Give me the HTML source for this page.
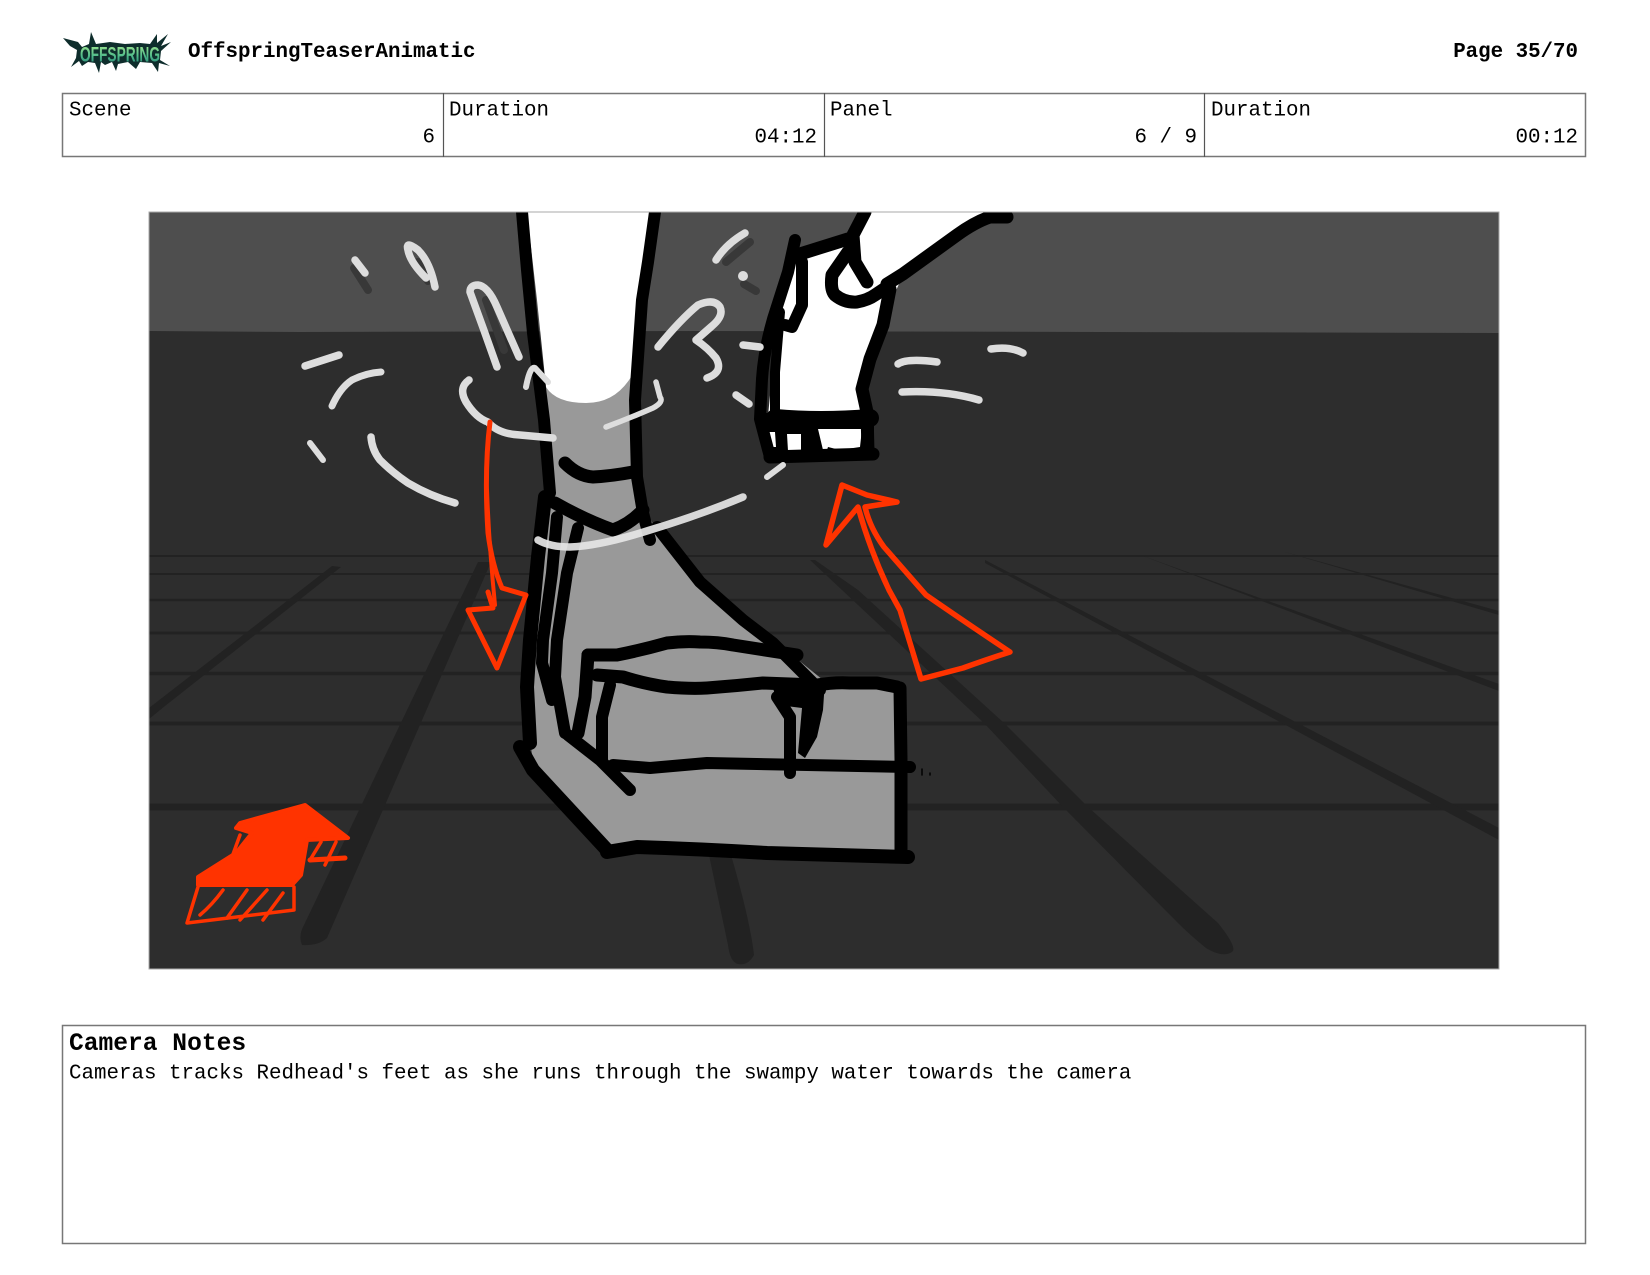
<!DOCTYPE html>
<html><head><meta charset="utf-8"><title>OffspringTeaserAnimatic</title>
<style>
html,body{margin:0;padding:0;background:#fff;width:1650px;height:1275px;overflow:hidden}
svg{display:block;position:absolute;left:0;top:0}
text{font-family:"Liberation Mono",monospace;fill:#000}
.k{fill:none;stroke:#000;stroke-linecap:round;stroke-linejoin:round}
.s{fill:none;stroke:#ddd;stroke-width:7.5;stroke-linecap:round;stroke-linejoin:round}
.h{fill:none;stroke:#383838;stroke-width:8;stroke-linecap:round;stroke-linejoin:round}
.r{fill:none;stroke:#ff3300;stroke-linecap:round;stroke-linejoin:round}
</style></head><body>
<svg width="1650" height="1275" viewBox="0 0 1650 1275" xmlns="http://www.w3.org/2000/svg">
<defs>
<clipPath id="p"><rect x="149" y="212" width="1350" height="757"/></clipPath>
<linearGradient id="g" x1="0" y1="0" x2="0" y2="1"><stop offset="0" stop-color="#a5e98f"/><stop offset=".55" stop-color="#4fb98a"/><stop offset="1" stop-color="#1d7a70"/></linearGradient>
</defs>
<rect width="1650" height="1275" fill="#fff"/>

<!-- logo -->
<path fill="#0e2d2c" d="M63 38 L78 42 L82 47 L89 44 L91 32 L96 44 L110 42 L125 44 L140 43 L150 44 L157 34 L157 43 L168 34 L161 46 L171 42 L161 51 L160 60 L170 66 L159 63 L158 72 L152 63 L140 62 L136 69 L128 62 L118 64 L116 71 L112 62 L105 65 L101 62 L99 73 L95 63 L88 62 L82 66 L79 61 L71 67 L76 58 L77 50 L70 46 Z"/>
<text x="80" y="61.500" textLength="80" lengthAdjust="spacingAndGlyphs" style="font-family:'Liberation Sans',sans-serif;font-weight:700;font-size:21px;fill:url(#g)">OFFSPRING</text>

<!-- header text -->
<text x="188" y="57" font-size="20.83" font-weight="700">OffspringTeaserAnimatic</text>
<text x="1578" y="57" font-size="20.8" font-weight="700" text-anchor="end">Page 35/70</text>

<!-- table -->
<rect x="62.500" y="93.500" width="1523" height="63" fill="none" stroke="#777" stroke-width="1.5"/>
<path d="M443.500 93V157M824.500 93V157M1204.500 93V157" stroke="#555" stroke-width="1.2"/>
<text x="69" y="115.500" font-size="20.83">Scene</text>
<text x="449" y="115.500" font-size="20.83">Duration</text>
<text x="830" y="115.500" font-size="20.83">Panel</text>
<text x="1211" y="115.500" font-size="20.83">Duration</text>
<text x="435" y="142.500" font-size="20.83" text-anchor="end">6</text>
<text x="817" y="142.500" font-size="20.83" text-anchor="end">04:12</text>
<text x="1197" y="142.500" font-size="20.83" text-anchor="end">6 / 9</text>
<text x="1578" y="142.500" font-size="20.83" text-anchor="end">00:12</text>

<!-- panel -->
<g clip-path="url(#p)">
<rect x="149" y="212" width="1350" height="757" fill="#2d2d2d"/>
<path d="M149 212H1499V333L1100 332L700 331L300 332L149 331Z" fill="#4e4e4e"/>

<!-- floor grid -->
<g stroke="#222" fill="none">
<path d="M149 556H1499" stroke-width="2"/>
<path d="M149 574H1499" stroke-width="2"/>
<path d="M149 600H1499" stroke-width="2.5"/>
<path d="M149 633H1499" stroke-width="3"/>
<path d="M149 673.500H1499" stroke-width="3.5"/>
<path d="M149 723.500H1499" stroke-width="4"/>
<path d="M149 807H1499" stroke-width="7"/>
</g>
<g fill="#222">
<path d="M332 566L341 567L165 706L149 719L149 708Z"/>
<path d="M478 562L491 562L327 938Q318 946 302 945Q298 936 304 925Z"/>
<path d="M709 855L731 855Q750 920 754 955Q748 966 738 964Q730 962 728 945Z"/>
<path d="M810 560L815 560L858 590L1004 723L1088 807L1218 923Q1238 948 1232 952Q1222 958 1206 948Q1190 935 1178 923L1063 807L984 723L842 590Z"/>
<path d="M985 560L1499 828L1499 840L985 563Z"/>
<path d="M1143 556L1499 684L1499 691Z"/>
<path d="M1285 552L1499 611L1499 615Z"/>
</g>

<!-- splash shadows -->
<path class="h" d="M354 268L368 290"/>
<path class="h" d="M418 262L428 281"/>
<path class="h" d="M486 300L504 350"/>
<path class="h" d="M726 262L750 242"/>
<path class="h" d="M744 284L756 291"/>

<!-- front foot fill -->
<path fill="#999" d="M546 387L586 403L631 377L636 400L640 500L658 533L711 590L765 633L823 680L899 684L902 760L899 852L740 855L635 845L609 852L533 763L524 690L533 600L548 490Z"/>
<path fill="#fff" d="M527 212H650L640 300L631 377Q615 403 586 403Q556 403 546 387L537 300Z"/>

<!-- front foot lines -->
<g class="k">
<path stroke-width="12" d="M522 212L527 270L533 333L544 420L550 493"/>
<path stroke-width="12" d="M655 212L648 262L642 300L635 400L637 477L643 513L650 540"/>
<path stroke-width="13" d="M565 463Q578 476 593 477Q612 476 633 472"/>
<path stroke-width="13" d="M555 503Q585 520 613 530Q630 524 643 510"/>
<path stroke-width="12" d="M657 527L700 582L743 620L773 643L820 690"/>
<path stroke-width="14" d="M545 497L538 557L530 640L527 687L530 743"/>
<path stroke-width="14" d="M520 747L533 770L607 850"/>
<path stroke-width="12" d="M557 517L552 573L543 640L542 663L552 700"/>
<path stroke-width="12" d="M578 528L567 573L557 640L555 677L565 733"/>
<path stroke-width="12" d="M568 735L600 760L630 790"/>
<path stroke-width="13" d="M588 655L617 655Q642 650 667 643Q684 641 700 642Q718 642 733 645L797 655"/>
<path stroke-width="13" d="M597 675L623 677Q645 684 667 687Q690 689 707 688Q735 686 763 683L817 685Q835 682 850 683L877 683L897 687"/>
<path stroke-width="13" d="M900 688L901 760L901 853"/>
<path stroke-width="14" d="M607 852L637 847Q700 849 767 853L908 857"/>
<path stroke-width="13" d="M588 655L585 697L578 733"/>
<path stroke-width="12" d="M610 685L602 717L602 760"/>
<path stroke-width="12" d="M613 765L650 768L707 763L910 767"/>
<path stroke-width="12" d="M777 697L790 717L790 773"/>
<path stroke-width="1.500" d="M922 769V775M930 773V775"/>
</g>
<path fill="#000" d="M770 678L825 680L823 710L817 737L805 758L798 753L802 708L778 705Z"/>

<!-- back foot -->
<path fill="#fff" d="M864 212H990L954 240L904 273L884 317L862 367L868 416L768 416L776 333L795 250L847 237Z"/>
<path fill="#000" d="M765 413H874V455L767 458Z"/>
<path fill="#fff" d="M769 432L775 432L776 447L772 447ZM787 434L801 434L801 451L788 451ZM818 429L862 429L860 447L840 450L828 447L827 450L823 450Z"/>
<g class="k">
<path stroke-width="12" d="M795 240L788 272L773 319Q764 350 762 379L760 419L770 457"/>
<path stroke-width="10" d="M780 312L775 372L775 412"/>
<path stroke-width="12" d="M802 262L802 305L792 327L785 325"/>
<path stroke-width="13" d="M770 457L873 454"/>
<path stroke-width="13" d="M890 289L883 325L870 359L862 389L867 412L868 452"/>
<path stroke-width="18" d="M775 418Q820 422 870 418"/>
<path stroke-width="13" d="M800 254L848 239"/>
<path stroke-width="13" d="M848 252L832 275Q830 290 835 295Q845 303 857 302Q868 300 875 295L887 287"/>
<path stroke-width="13" d="M865 212L853 235L855 262L867 282"/>
<path stroke-width="13" d="M887 284L903 274L957 235Q975 222 990 217L1007 217"/>
</g>

<!-- splash -->
<g class="s">
<path d="M355 260L365 273"/>
<path d="M435 287Q430 262 418 250Q405 240 408 250Q410 262 426 278"/>
<path d="M497 367Q484 330 470 292Q470 285 478 285Q488 286 497 307L519 357"/>
<path d="M305 366L339 355"/>
<path d="M332 406Q340 388 352 380Q366 373 381 372" stroke-width="7"/>
<path d="M310 443L323 460" stroke-width="6"/>
<path d="M371 437Q372 450 380 460Q392 472 408 483Q430 496 455 503"/>
<path d="M469 380Q458 388 466 402Q476 418 488 422Q498 434 520 435L553 438"/>
<path d="M526 387Q530 366 535 368L548 382" stroke-width="6"/>
<path d="M606 427Q630 418 653 408Q664 402 660 397L656 382" stroke-width="5.500"/>
<path d="M658 347Q680 320 698 305Q714 298 720 307Q724 316 712 326L696 340Q708 348 716 358Q724 372 707 378"/>
<path d="M743 345L760 347"/>
<path d="M736 395L749 404"/>
<path d="M716 260Q726 244 745 233"/>
<circle cx="743" cy="276" r="5" fill="#ddd" stroke="none"/>
<path d="M767 477L783 465" stroke-width="6"/>
<path d="M898 364Q907 358 937 362"/>
<path d="M991 349Q1010 346 1023 353"/>
<path d="M902 392Q945 390 979 400"/>
</g>
<path fill="none" stroke="#e6e6e6" stroke-opacity=".92" stroke-width="7.500" stroke-linecap="round" d="M538 540Q550 547 570 547Q600 546 650 530Q700 515 743 497"/>

<!-- red arrow down -->
<g class="r">
<path stroke-width="5" d="M490 422Q484 470 488 533Q492 565 502 588L526 595L497 668L468 610L493 608L488 592"/>
<path stroke-width="4" d="M487 490Q489 545 495 605"/>
<!-- red arrow up -->
<path stroke-width="5.500" d="M858 507L826 545L842 485L867 495L897 502L865 507Q870 528 884 547L926 595Q965 622 1010 652Q985 660 963 668L921 679L900 610L889 590Q870 550 858 507Z"/>
</g>

<!-- red house -->
<path fill="#ff3300" stroke="#ff3300" stroke-width="4" stroke-linejoin="round" d="M305 805L348 838L307 840L301 875L292 885L198 885L198 877L236 853L252 833L236 828L240 823Z"/>
<g class="r" stroke-width="3.500">
<path d="M240 835L232 857"/>
<path d="M198 887L187 923L294 910L294 887"/>
<path d="M200 915Q212 905 223 890M227 918L247 890M240 920L267 890M263 920L283 893"/>
<path stroke-width="5" d="M310 860L345 858"/>
<path d="M321 842L310 860M336 842L325 865"/>
</g>
</g>
<rect x="149" y="212" width="1350" height="757" fill="none" stroke="#aaa" stroke-width="1"/>

<!-- notes -->
<rect x="62.500" y="1025.500" width="1523" height="218" fill="none" stroke="#777" stroke-width="1.5"/>
<text x="69" y="1050" font-size="24.6" font-weight="700">Camera Notes</text>
<text x="69" y="1078.500" font-size="20.83">Cameras tracks Redhead's feet as she runs through the swampy water towards the camera</text>
</svg>
</body></html>
